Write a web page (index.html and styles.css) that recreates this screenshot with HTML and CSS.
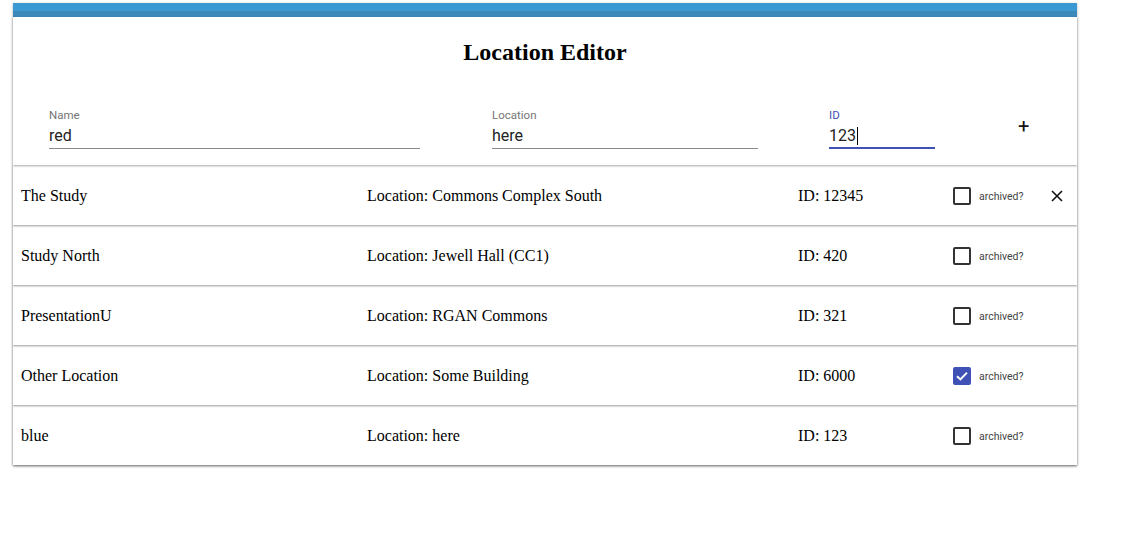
FILE: index.html
```html
<!DOCTYPE html>
<html>
<head>
<meta charset="utf-8">
<link rel="stylesheet" href="styles.css">
</head>
<body>
<div class="card">
  <div class="topbar"><div class="bar-light"></div><div class="bar-dark"></div></div>
  <div class="header">
    <h2 class="title">Location Editor</h2>
    <div class="form">
      <div class="field field-name">
        <label class="label">Name</label>
        <div class="value">red</div>
      </div>
      <div class="field field-loc">
        <label class="label">Location</label>
        <div class="value">here</div>
      </div>
      <div class="field field-id focused">
        <label class="label">ID</label>
        <div class="value">123<span class="caret"></span></div>
      </div>
      <div class="add">+</div>
    </div>
  </div>
  <div class="row">
    <div class="c-name">The Study</div>
    <div class="c-loc">Location: Commons Complex South</div>
    <div class="c-id">ID: 12345</div>
    <div class="c-arch"><span class="box"></span><span class="arch-label">archived?</span></div>
    <div class="c-del"><svg width="12" height="12" viewBox="0 0 12 12"><path d="M1 1L11 11M11 1L1 11" stroke="#111" stroke-width="1.6"/></svg></div>
  </div>
  <div class="row">
    <div class="c-name">Study North</div>
    <div class="c-loc">Location: Jewell Hall (CC1)</div>
    <div class="c-id">ID: 420</div>
    <div class="c-arch"><span class="box"></span><span class="arch-label">archived?</span></div>
    <div class="c-del"></div>
  </div>
  <div class="row">
    <div class="c-name">PresentationU</div>
    <div class="c-loc">Location: RGAN Commons</div>
    <div class="c-id">ID: 321</div>
    <div class="c-arch"><span class="box"></span><span class="arch-label">archived?</span></div>
    <div class="c-del"></div>
  </div>
  <div class="row">
    <div class="c-name">Other Location</div>
    <div class="c-loc">Location: Some Building</div>
    <div class="c-id">ID: 6000</div>
    <div class="c-arch"><span class="box checked"><svg width="18" height="18" viewBox="0 0 18 18"><path d="M4 9.2L7.4 12.4L14 5.6" fill="none" stroke="#fff" stroke-width="2"/></svg></span><span class="arch-label">archived?</span></div>
    <div class="c-del"></div>
  </div>
  <div class="row">
    <div class="c-name">blue</div>
    <div class="c-loc">Location: here</div>
    <div class="c-id">ID: 123</div>
    <div class="c-arch"><span class="box"></span><span class="arch-label">archived?</span></div>
    <div class="c-del"></div>
  </div>
</div>
</body>
</html>
```
FILE: styles.css
```css
html, body {
  margin: 0;
  padding: 0;
  background: #fff;
}
body {
  padding: 3px 0 40px 13px;
  min-height: 500px;
  font-family: "Liberation Serif", "Times New Roman", serif;
}
.card {
  width: 1064px;
  background: #fff;
  box-shadow: 0 1px 3px rgba(0,0,0,0.3);
}
.topbar {
  display: flex;
  flex-direction: column;
}
.bar-light {
  height: 8px;
  background: #3a98d2;
}
.bar-dark {
  height: 6px;
  background: #3b88b9;
}
.header {
  position: relative;
  z-index: 6;
  background: #fff;
  box-shadow: 0 1px 2px rgba(0,0,0,0.35);
  height: 148px;
  display: flex;
  flex-direction: column;
}
.title {
  margin: 21px 0 0;
  font-size: 24px;
  line-height: 28px;
  text-align: center;
  font-weight: bold;
  color: #000;
}
.form {
  display: flex;
  align-items: flex-start;
  margin-top: 42px;
  padding-left: 36px;
  font-family: Roboto, "Liberation Sans", sans-serif;
}
.field {
  display: flex;
  flex-direction: column;
  border-bottom: 1px solid #8a8a8a;
  height: 41px;
  box-sizing: border-box;
}
.field-name { width: 371px; }
.field-loc { width: 266px; margin-left: 72px; }
.field-id { width: 106px; margin-left: 71px; }
.field.focused {
  border-bottom: 2px solid #3f51b5;
  height: 41px;
}
.label {
  font-size: 11.5px;
  line-height: 14px;
  color: #757575;
}
.focused .label { color: #3f51b5; }
.value {
  font-size: 16px;
  line-height: 20px;
  margin-top: 4px;
  color: #222;
  display: flex;
  align-items: center;
}
.caret {
  display: inline-block;
  width: 1px;
  height: 18px;
  background: #000;
  margin-left: 1px;
}
.add {
  margin-left: 83px;
  margin-top: 8px;
  font-size: 20px;
  line-height: 20px;
  color: #111;
}
.row {
  position: relative;
  background: #fff;
  height: 60px;
  box-sizing: border-box;
  padding-top: 2px;
  display: flex;
  align-items: center;
  padding-left: 8px;
  box-shadow: 0 1px 2px rgba(0,0,0,0.4);
  font-size: 16px;
  color: #000;
}
.row:nth-child(3) { z-index: 5; }
.row:nth-child(4) { z-index: 4; }
.row:nth-child(5) { z-index: 3; }
.row:nth-child(6) { z-index: 2; }
.row:nth-child(7) { z-index: 1; }
.c-name { width: 346px; }
.c-loc { width: 431px; }
.c-id { width: 155px; }
.c-arch {
  display: flex;
  align-items: center;
  width: 98px;
}
.box {
  width: 18px;
  height: 18px;
  box-sizing: border-box;
  border: 2px solid #333;
  border-radius: 2px;
  display: inline-flex;
}
.box.checked {
  border: none;
  background: #3f51b5;
}
.arch-label {
  margin-left: 8px;
  font-family: Roboto, "Liberation Sans", sans-serif;
  font-size: 10.5px;
  color: #444;
}
.c-del {
  display: flex;
  align-items: center;
}
```
